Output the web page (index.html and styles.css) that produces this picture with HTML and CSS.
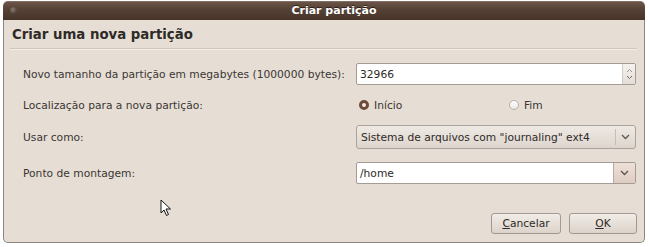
FILE: index.html
```html
<!DOCTYPE html>
<html lang="pt">
<head>
  <meta charset="UTF-8">
  <title>Criar partição</title>
  <link rel="stylesheet" href="styles.css">
</head>
<body>

  <div class="window">
    <!-- Title bar -->
    <div class="titlebar">
      <span class="menu-dot"></span>
      <span class="title">Criar partição</span>
    </div>

    <div class="content">
      <div class="header">Criar uma nova partição</div>

      <div class="form">
        <div class="row row-size">
          <label class="label">Novo tamanho da partição em megabytes (1000000 bytes):</label>
          <div class="entry spin">
            <span class="entry-text">32966</span>
            <span class="spin-buttons">
              <svg width="7" height="14" viewBox="0 0 7 14">
                <path d="M1 5 L3.5 2.5 L6 5" fill="none" stroke="#9a948e" stroke-width="1"/>
                <path d="M1 9 L3.5 11.5 L6 9" fill="none" stroke="#6f6a65" stroke-width="1"/>
              </svg>
            </span>
          </div>
        </div>

        <div class="row row-location">
          <label class="label">Localização para a nova partição:</label>
          <div class="radios">
            <span class="radio-item first"><span class="radio checked"></span>Início</span>
            <span class="radio-item"><span class="radio"></span>Fim</span>
          </div>
        </div>

        <div class="row row-type">
          <label class="label">Usar como:</label>
          <div class="combo">
            <span class="combo-text">Sistema de arquivos com "journaling" ext4</span>
            <span class="combo-arrow">
              <svg width="9" height="6" viewBox="0 0 9 6">
                <path d="M1 1 L4.5 4.5 L8 1" fill="none" stroke="#5c5650" stroke-width="1.3"/>
              </svg>
            </span>
          </div>
        </div>

        <div class="row row-mount">
          <label class="label">Ponto de montagem:</label>
          <div class="entry combo-entry">
            <span class="entry-text">/home</span>
            <span class="entry-button">
              <svg width="9" height="6" viewBox="0 0 9 6">
                <path d="M1 1 L4.5 4.5 L8 1" fill="none" stroke="#5c5650" stroke-width="1.3"/>
              </svg>
            </span>
          </div>
        </div>
      </div>

      <div class="actions">
        <button class="btn btn-cancel"><u>C</u>ancelar</button>
        <button class="btn btn-ok"><u>O</u>K</button>
      </div>

      <!-- mouse pointer over the dialog -->
      <svg class="cursor" width="12" height="18" viewBox="0 0 12 18">
        <path d="M1 1 L1 14 L4 11 L6.5 16.5 L8.5 15.5 L6 10 L10.5 10 Z" fill="#fff" stroke="#111" stroke-width="1" stroke-linejoin="round"/>
      </svg>
    </div>
  </div>

</body>
</html>
```

FILE: styles.css
```css
body {
  margin: 0;
  background: #ffffff;
  font-family: 'DejaVu Sans', sans-serif;
  font-size: 10.7px;
  color: #3a3633;
}

/* Window frame */
.window {
  width: 642px;
  margin: 1px 0 0 3px;
}

.titlebar {
  height: 19px;
  background: linear-gradient(#6d574a, #564135 45%, #473429);
  border-radius: 5px 5px 0 0;
  display: flex;
  align-items: center;
  justify-content: center;
  padding-left: 20px;
  position: relative;
  box-shadow: inset 0 1px 0 rgba(255,255,255,0.15);
}

.menu-dot {
  position: absolute;
  left: 7px;
  top: 6px;
  width: 7px;
  height: 7px;
  border-radius: 50%;
  background: radial-gradient(circle at 40% 35%, #8a7a70, #3a2c24);
}

.title {
  color: #ffffff;
  font-weight: bold;
  font-size: 11px;
  text-shadow: 0 -1px 0 #2a1e18;
}

.content {
  position: relative;
  height: 222px;
  background: #e6ded5;
  border: 1px solid #8a857f;
  border-top: none;
  border-radius: 0 0 5px 5px;
  padding: 0 7px 0 0;
  display: flex;
  flex-direction: column;
}

.header {
  font-size: 13.3px;
  font-weight: bold;
  color: #2e2a27;
  margin: 7px 0 0 6px;
  padding: 0 0 6px 2px;
  border-bottom: 1px solid #cfc6bc;
  box-shadow: 0 1px 0 #f3eee9;
}

/* Form rows */
.form {
  display: flex;
  flex-direction: column;
  padding-left: 19px;
  margin-top: 14px;
}

.row {
  display: flex;
  align-items: center;
  height: 22px;
}

.row-location { margin-top: 9px; }
.row-type { margin-top: 9px; height: 24px; }
.row-mount { margin-top: 13px; }

.label {
  width: 333px;
}

.entry {
  width: 280px;
  height: 22px;
  box-sizing: border-box;
  background: #ffffff;
  border: 1px solid #a39c95;
  border-radius: 2px;
  display: flex;
  align-items: center;
  padding-left: 3px;
}

.entry-text {
  flex: 1;
  color: #2e2a27;
}

.spin-buttons {
  width: 12px;
  height: 20px;
  border-left: 1px solid #d2ccc6;
  background: linear-gradient(#f5f2ef, #e4ddd6);
  display: flex;
  align-items: center;
  justify-content: center;
}

.entry-button {
  width: 21px;
  height: 20px;
  border-left: 1px solid #b9aaa0;
  background: linear-gradient(#eedfd7, #dfcdc3);
  display: flex;
  align-items: center;
  justify-content: center;
}

/* Radios */
.radios {
  display: flex;
  width: 280px;
}

.radio-item {
  display: flex;
  align-items: center;
  gap: 5px;
  padding-left: 3px;
}

.radio-item.first {
  width: 147px;
}

.radio {
  width: 10px;
  height: 10px;
  box-sizing: border-box;
  border-radius: 50%;
  border: 1px solid #b8b0a8;
  background: linear-gradient(#ffffff, #ebe6e1);
}

.radio.checked {
  border: 3px solid #6e4a3a;
  background: #f4ede8;
}

/* Combo box */
.combo {
  width: 280px;
  height: 24px;
  box-sizing: border-box;
  border: 1px solid #aaa39c;
  border-radius: 3px;
  background: linear-gradient(#efe9e4, #ddd5cd);
  display: flex;
  align-items: center;
  padding-left: 4px;
  color: #2e2a27;
}

.combo-text {
  flex: 1;
}

.combo-arrow {
  width: 19px;
  height: 16px;
  border-left: 1px solid #c6beb6;
  display: flex;
  align-items: center;
  justify-content: center;
}

/* Dialog buttons */
.actions {
  margin-top: auto;
  margin-bottom: 8px;
  display: flex;
  justify-content: flex-end;
  gap: 8px;
}

.btn {
  height: 21px;
  font-family: 'DejaVu Sans', sans-serif;
  font-size: 10.7px;
  color: #2e2a27;
  border: 1px solid #a29a92;
  border-radius: 3px;
  background: linear-gradient(#f1ece7, #dcd3ca);
  padding: 0;
}

.btn-cancel { width: 70px; }
.btn-ok { width: 68px; }

.cursor {
  position: absolute;
  left: 156px;
  top: 179px;
}
```
